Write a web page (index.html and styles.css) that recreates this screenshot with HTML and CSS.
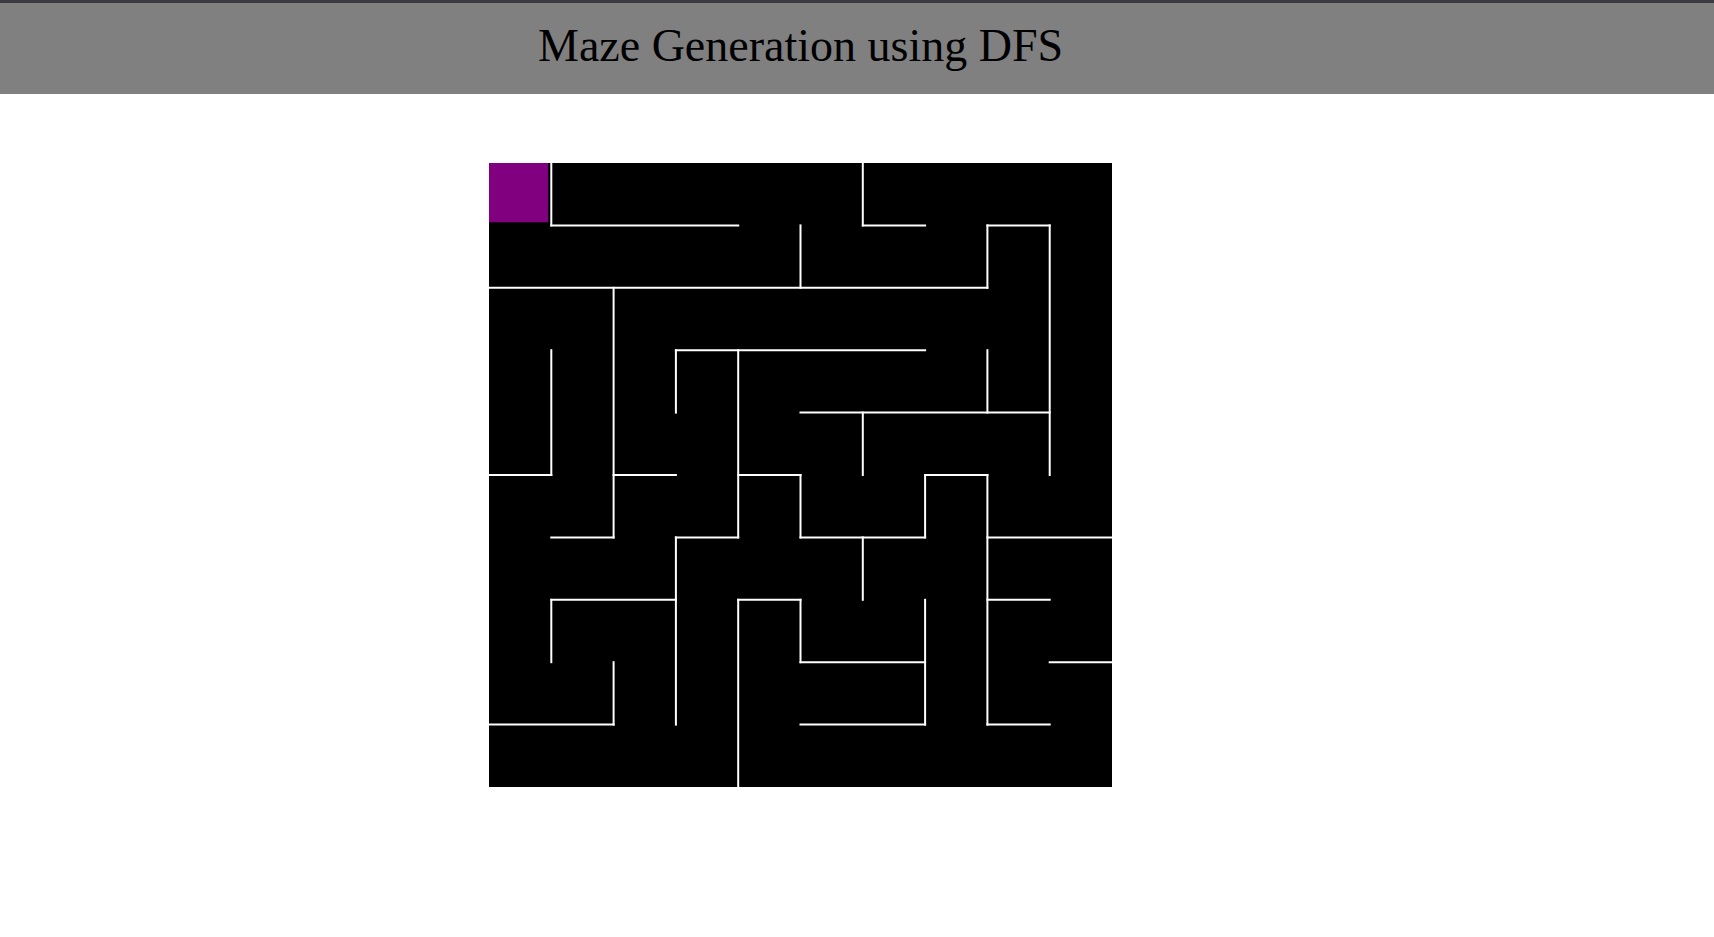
FILE: index.html
```html
<!DOCTYPE html>
<html>
<head>
<meta charset="utf-8">
<title>Maze Generation using DFS</title>
<link rel="stylesheet" href="styles.css">
</head>
<body>
<header class="topbar">
  <h1 class="title">Maze Generation using DFS</h1>
</header>
<main class="stage">
  <svg class="maze" viewBox="0 0 10 10" preserveAspectRatio="none" xmlns="http://www.w3.org/2000/svg">
    <rect x="0" y="0" width="10" height="10" fill="#000"/>
    <rect x="0" y="0" width="0.95" height="0.95" fill="#800080"/>
    <g stroke="#fff" stroke-width="2" fill="none" stroke-linecap="square">
      <!-- horizontal walls -->
      <line x1="1" y1="1" x2="4" y2="1" vector-effect="non-scaling-stroke"/>
      <line x1="6" y1="1" x2="7" y2="1" vector-effect="non-scaling-stroke"/>
      <line x1="8" y1="1" x2="9" y2="1" vector-effect="non-scaling-stroke"/>
      <line x1="0" y1="2" x2="8" y2="2" vector-effect="non-scaling-stroke"/>
      <line x1="3" y1="3" x2="7" y2="3" vector-effect="non-scaling-stroke"/>
      <line x1="5" y1="4" x2="9" y2="4" vector-effect="non-scaling-stroke"/>
      <line x1="0" y1="5" x2="1" y2="5" vector-effect="non-scaling-stroke"/>
      <line x1="2" y1="5" x2="3" y2="5" vector-effect="non-scaling-stroke"/>
      <line x1="4" y1="5" x2="5" y2="5" vector-effect="non-scaling-stroke"/>
      <line x1="7" y1="5" x2="8" y2="5" vector-effect="non-scaling-stroke"/>
      <line x1="1" y1="6" x2="2" y2="6" vector-effect="non-scaling-stroke"/>
      <line x1="3" y1="6" x2="4" y2="6" vector-effect="non-scaling-stroke"/>
      <line x1="5" y1="6" x2="7" y2="6" vector-effect="non-scaling-stroke"/>
      <line x1="8" y1="6" x2="10" y2="6" vector-effect="non-scaling-stroke"/>
      <line x1="1" y1="7" x2="3" y2="7" vector-effect="non-scaling-stroke"/>
      <line x1="4" y1="7" x2="5" y2="7" vector-effect="non-scaling-stroke"/>
      <line x1="8" y1="7" x2="9" y2="7" vector-effect="non-scaling-stroke"/>
      <line x1="5" y1="8" x2="7" y2="8" vector-effect="non-scaling-stroke"/>
      <line x1="9" y1="8" x2="10" y2="8" vector-effect="non-scaling-stroke"/>
      <line x1="0" y1="9" x2="2" y2="9" vector-effect="non-scaling-stroke"/>
      <line x1="5" y1="9" x2="7" y2="9" vector-effect="non-scaling-stroke"/>
      <line x1="8" y1="9" x2="9" y2="9" vector-effect="non-scaling-stroke"/>
      <!-- vertical walls -->
      <line x1="1" y1="0" x2="1" y2="1" vector-effect="non-scaling-stroke"/>
      <line x1="1" y1="3" x2="1" y2="5" vector-effect="non-scaling-stroke"/>
      <line x1="1" y1="7" x2="1" y2="8" vector-effect="non-scaling-stroke"/>
      <line x1="2" y1="2" x2="2" y2="6" vector-effect="non-scaling-stroke"/>
      <line x1="2" y1="8" x2="2" y2="9" vector-effect="non-scaling-stroke"/>
      <line x1="3" y1="3" x2="3" y2="4" vector-effect="non-scaling-stroke"/>
      <line x1="3" y1="6" x2="3" y2="9" vector-effect="non-scaling-stroke"/>
      <line x1="4" y1="3" x2="4" y2="6" vector-effect="non-scaling-stroke"/>
      <line x1="4" y1="7" x2="4" y2="10" vector-effect="non-scaling-stroke"/>
      <line x1="5" y1="1" x2="5" y2="2" vector-effect="non-scaling-stroke"/>
      <line x1="5" y1="5" x2="5" y2="6" vector-effect="non-scaling-stroke"/>
      <line x1="5" y1="7" x2="5" y2="8" vector-effect="non-scaling-stroke"/>
      <line x1="6" y1="0" x2="6" y2="1" vector-effect="non-scaling-stroke"/>
      <line x1="6" y1="4" x2="6" y2="5" vector-effect="non-scaling-stroke"/>
      <line x1="6" y1="6" x2="6" y2="7" vector-effect="non-scaling-stroke"/>
      <line x1="7" y1="5" x2="7" y2="6" vector-effect="non-scaling-stroke"/>
      <line x1="7" y1="7" x2="7" y2="9" vector-effect="non-scaling-stroke"/>
      <line x1="8" y1="1" x2="8" y2="2" vector-effect="non-scaling-stroke"/>
      <line x1="8" y1="3" x2="8" y2="4" vector-effect="non-scaling-stroke"/>
      <line x1="8" y1="5" x2="8" y2="9" vector-effect="non-scaling-stroke"/>
      <line x1="9" y1="1" x2="9" y2="5" vector-effect="non-scaling-stroke"/>
    </g>
  </svg>
</main>
</body>
</html>
```
FILE: styles.css
```css
html, body {
  margin: 0;
  padding: 0;
  background: #ffffff;
}

.topbar {
  border-top: 3px solid #3c3b41;
  background: #808080;
  height: 94px;
  box-sizing: border-box;
  padding: 16px 0 0 538px;
}

.title {
  margin: 0;
  font-family: "Liberation Serif", "Times New Roman", serif;
  font-weight: normal;
  font-size: 46px;
  line-height: normal;
  color: #000;
  white-space: nowrap;
}

.stage {
  padding: 69px 0 0 489px;
}

.maze {
  display: block;
  width: 623px;
  height: 624px;
}
```
